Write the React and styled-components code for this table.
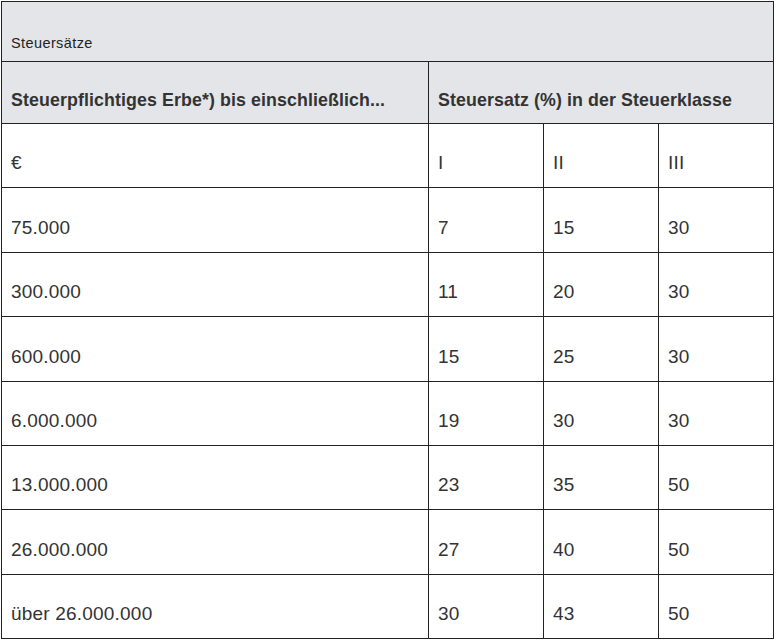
import React from 'react';
import styled, { createGlobalStyle } from 'styled-components';

const GlobalStyle = createGlobalStyle`
  body {
    margin: 0;
    background: #fff;
    font-family: "Liberation Sans", Arial, sans-serif;
  }
`;

const Wrapper = styled.div`
  padding: 1px 0 0 1px;
`;

const Table = styled.table`
  width: 773px;
  border-collapse: collapse;
  table-layout: fixed;
  border: 1px solid #222;
  color: #333;
`;

const Cell = styled.td`
  box-sizing: border-box;
  border: 1px solid #222;
  padding: 0 9px ${({ $pb }) => $pb || 13}px 9px;
  vertical-align: bottom;
  text-align: left;
`;

const CaptionCell = styled(Cell)`
  background: #e4e5e9;
  height: 60px;
  font-size: 14.5px;
  letter-spacing: 0.4px;
  color: #222;
`;

const HeadCell = styled(Cell)`
  background: #e4e5e9;
  height: 62px;
  font-size: 17.8px;
  font-weight: bold;
  letter-spacing: 0.1px;
`;

const BodyCell = styled(Cell)`
  height: 64.4px;
  font-size: 19px;
  letter-spacing: 0.2px;
`;

const rows = [
  ['75.000', '7', '15', '30'],
  ['300.000', '11', '20', '30'],
  ['600.000', '15', '25', '30'],
  ['6.000.000', '19', '30', '30'],
  ['13.000.000', '23', '35', '50'],
  ['26.000.000', '27', '40', '50'],
  ['über 26.000.000', '30', '43', '50'],
];

export default function App() {
  return (
    <Wrapper>
      <GlobalStyle />
      <Table>
        <colgroup>
          <col style={{ width: 427 }} />
          <col style={{ width: 115 }} />
          <col style={{ width: 115 }} />
          <col style={{ width: 115 }} />
        </colgroup>
        <tbody>
          <tr>
            <CaptionCell colSpan={4} $pb={10}>Steuersätze</CaptionCell>
          </tr>
          <tr>
            <HeadCell $pb={12}>Steuerpflichtiges Erbe*) bis einschließlich...</HeadCell>
            <HeadCell colSpan={3} $pb={12}>Steuersatz (%) in der Steuerklasse</HeadCell>
          </tr>
          <tr>
            <BodyCell>€</BodyCell>
            <BodyCell>I</BodyCell>
            <BodyCell>II</BodyCell>
            <BodyCell>III</BodyCell>
          </tr>
          {rows.map((r, i) => (
            <tr key={i}>
              {r.map((v, j) => (
                <BodyCell key={j}>{v}</BodyCell>
              ))}
            </tr>
          ))}
        </tbody>
      </Table>
    </Wrapper>
  );
}
